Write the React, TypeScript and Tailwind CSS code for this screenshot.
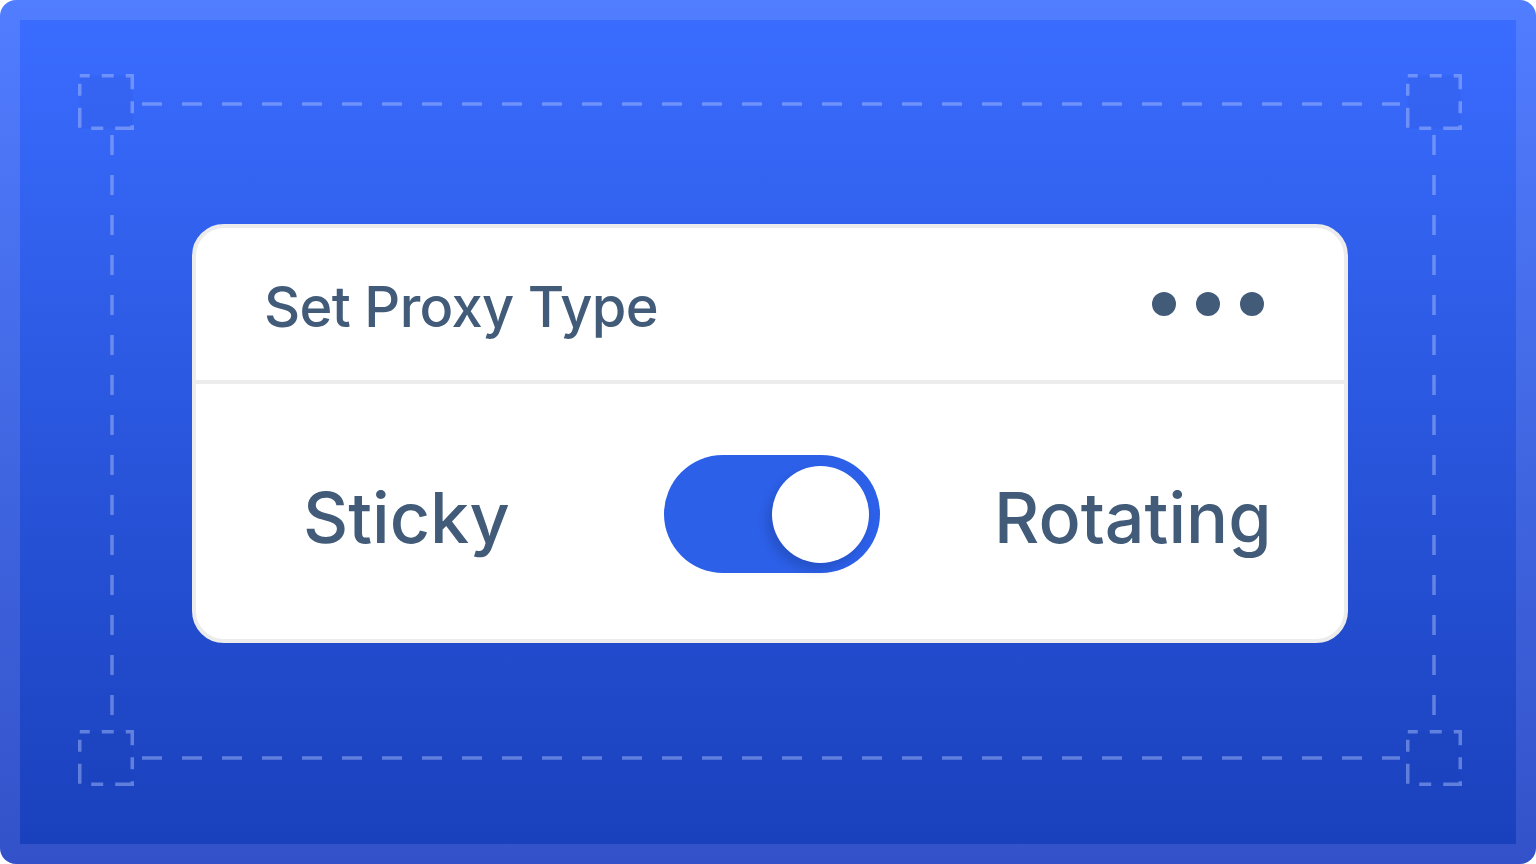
import React from 'react';

const font = { fontFamily: 'Inter, "Noto Sans", sans-serif' };

// dashed guide frame behind the card
function GuideFrame() {
  const dash = 'rgba(180,200,255,0.45)';
  const squares = [
    [58, 54],
    [1386, 54],
    [58, 710],
    [1386, 710],
  ];
  return (
    <svg className="absolute inset-0 pointer-events-none" width="1496" height="824" viewBox="0 0 1496 824">
      {/* horizontal lines */}
      <line x1="122" y1="84" x2="1380" y2="84" stroke={dash} strokeWidth="3.5" strokeDasharray="20 20" />
      <line x1="122" y1="738" x2="1380" y2="738" stroke={dash} strokeWidth="3.5" strokeDasharray="20 20" />
      {/* vertical lines */}
      <line x1="92" y1="115" x2="92" y2="705" stroke={dash} strokeWidth="3.5" strokeDasharray="20 20" />
      <line x1="1414" y1="115" x2="1414" y2="705" stroke={dash} strokeWidth="3.5" strokeDasharray="20 20" />
      {squares.map(([x, y], i) => (
        <rect
          key={i}
          x={x + 1.75}
          y={y + 1.75}
          width="52.5"
          height="52.5"
          fill="rgba(20,40,140,0.05)"
          stroke={dash}
          strokeWidth="3.5"
          strokeDasharray="10 12 12 12 10 0"
        />
      ))}
    </svg>
  );
}

function Toggle() {
  return (
    <div className="relative w-[216px] h-[118px] rounded-full bg-[#2c60e8] shrink-0">
      <div className="absolute right-[11px] top-[11px] w-[97px] h-[97px] rounded-full bg-white shadow-[-5px_7px_10px_rgba(10,20,60,0.18)]" />
    </div>
  );
}

export default function App() {
  return (
    <div className="w-[1536px] h-[864px] bg-white" style={font}>
      <div className="w-full h-full rounded-[16px] p-[20px] bg-gradient-to-b from-[#517dff] to-[#3352c9]">
        <div className="relative w-full h-full bg-gradient-to-b from-[#3a6cff] to-[#1a41bd] flex items-center justify-center">
          <GuideFrame />
          <div className="relative w-[1156px] h-[419px] ml-[4px] mt-[3px] rounded-[32px] border-[4px] border-[#ececec] bg-white flex flex-col overflow-hidden">
            <div className="h-[156px] flex items-center justify-between pl-[68px] pr-[80px] border-b-[4px] border-[#ececec]">
              <span className="text-[56px] font-medium tracking-[-0.012em] leading-none text-[#415b79] pt-[6px]">Set Proxy Type</span>
              <div className="flex items-center gap-[20px]">
                <span className="w-[24px] h-[24px] rounded-full bg-[#415b79]" />
                <span className="w-[24px] h-[24px] rounded-full bg-[#415b79]" />
                <span className="w-[24px] h-[24px] rounded-full bg-[#415b79]" />
              </div>
            </div>
            <div className="flex-1 flex items-center pl-[107px] pt-[4px]">
              <span className="text-[70px] font-medium leading-none text-[#415b79] w-[204px] pt-[8px]">Sticky</span>
              <div className="ml-[157px]">
                <Toggle />
              </div>
              <span className="ml-[114px] text-[70px] font-medium leading-none text-[#415b79] pt-[8px]">Rotating</span>
            </div>
          </div>
        </div>
      </div>
    </div>
  );
}
